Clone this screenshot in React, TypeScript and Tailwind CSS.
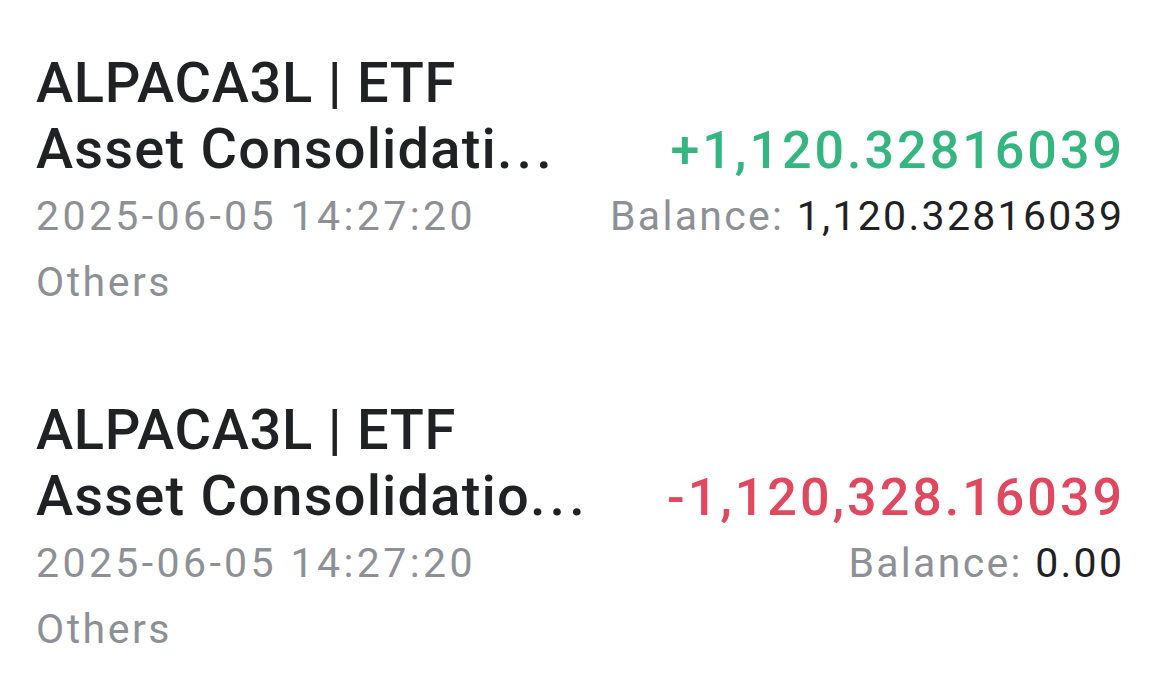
import React from "react";

type Row = {
  subtitle: string;
  amount: string;
  positive: boolean;
  balance: string;
};

const rows: Row[] = [
  { subtitle: "Asset Consolidati", amount: "+1,120.32816039", positive: true, balance: "1,120.32816039" },
  { subtitle: "Asset Consolidatio", amount: "-1,120,328.16039", positive: false, balance: "0.00" },
];

function Item({ r }: { r: Row }) {
  return (
    <div className="flex flex-col">
      <div className="h-[60px] leading-[60px] text-[56px] font-medium tracking-[0.7px] text-[#1f2124] whitespace-nowrap">
        ALPACA3L | ETF
      </div>
      <div className="h-[72px] leading-[72px] flex items-baseline justify-between whitespace-nowrap">
        <span className="text-[56px] font-medium tracking-[1.2px] text-[#1f2124]">
          {r.subtitle}
          <span className="tracking-[4px]">...</span>
        </span>
        <span
          className={`text-[52px] font-medium tracking-[3px] mr-[-3px] ${
            r.positive ? "text-[#33b680]" : "text-[#e0485f]"
          }`}
        >
          {r.amount}
        </span>
      </div>
      <div className="h-[62px] leading-[62px] flex items-baseline justify-between text-[41px] whitespace-nowrap">
        <span className="text-[#8d9094] tracking-[3.4px]">2025-06-05 14:27:20</span>
        <span className="tracking-[2.3px] mr-[-2.3px]">
          <span className="text-[#8d9094]">Balance: </span>
          <span className="text-[#1f2124]">{r.balance}</span>
        </span>
      </div>
      <div className="h-[70px] leading-[70px] text-[41px] tracking-[2.5px] text-[#8d9094]">Others</div>
    </div>
  );
}

export default function App() {
  return (
    <div
      className="w-[1156px] h-[686px] bg-white overflow-hidden"
      style={{ fontFamily: "Roboto, 'Noto Sans', sans-serif" }}
    >
      <div className="pl-[36px] pr-[34px] pt-[53px] flex flex-col gap-[83px]">
        {rows.map((r, i) => (
          <Item key={i} r={r} />
        ))}
      </div>
    </div>
  );
}
